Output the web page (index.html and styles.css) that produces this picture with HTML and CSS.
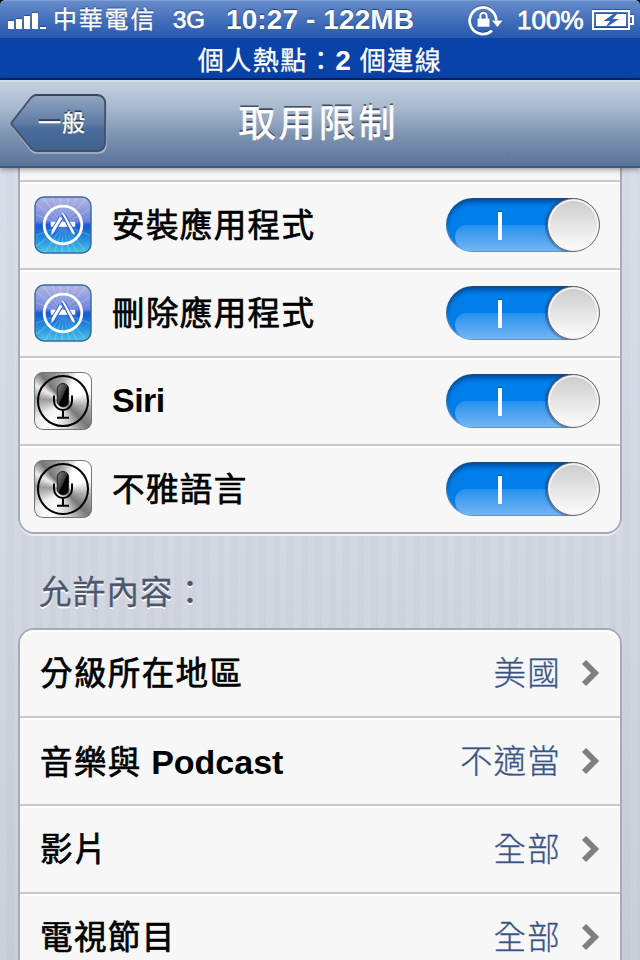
FILE: index.html
```html
<!DOCTYPE html>
<html lang="zh-Hant">

<head>
    <meta charset="UTF-8">
    <meta name="viewport" content="width=device-width, initial-scale=1.0">
    <title>取用限制</title>
    <link rel="stylesheet" href="styles.css">
</head>

<body>
    <!-- shared icons -->
    <svg class="defs" width="0" height="0">
        <defs>
            <linearGradient id="sky" x1="0" y1="0" x2="0" y2="1">
                <stop offset="0" stop-color="#b4b6e2"/>
                <stop offset=".43" stop-color="#6f85dc"/>
                <stop offset=".5" stop-color="#1557d6"/>
                <stop offset=".68" stop-color="#1b7fdc"/>
                <stop offset="1" stop-color="#4cc6e4"/>
            </linearGradient>
            <linearGradient id="mic" x1="0" y1="0" x2="1" y2="1">
                <stop offset=".1" stop-color="#777"/>
                <stop offset=".5" stop-color="#333"/>
                <stop offset=".52" stop-color="#000"/>
            </linearGradient>
            <clipPath id="round"><rect x="1" y="1" width="56" height="56" rx="9"/></clipPath>
        </defs>
        <symbol id="appstore" viewBox="0 0 58 58">
            <rect x="1" y="1" width="56" height="56" rx="9" fill="url(#sky)"/>
            <g clip-path="url(#round)" stroke="#fff" stroke-width="1.6" opacity=".16">
                <path d="M29 29L0 6M29 29L8 0M29 29L18 0M29 29L26 0M29 29L35 0M29 29L44 0M29 29L54 0M29 29L58 12M29 29L0 18M29 29L58 40M29 29L54 58M29 29L44 58M29 29L36 58M29 29L28 58M29 29L20 58M29 29L10 58M29 29L0 52M29 29L0 40"/>
            </g>
            <rect x="1" y="1" width="56" height="56" rx="9" fill="none" stroke="#34699f" stroke-width="1.4"/>
            <circle cx="29" cy="29" r="18.8" fill="none" stroke="#fff" stroke-width="2.8"/>
            <path d="M16.700 25.800h24.600v5H16.700z" fill="#fff"/>
            <path d="M27 21.500L18.500 36.500" stroke="#2e62d6" stroke-width="4.800"/>
            <path d="M27 21.500L19 35" stroke="#fff" stroke-width="3"/>
            <path d="M17.600 34l3 1.800-3.200 3z" fill="#fff"/>
            <path d="M29 18L39 36" stroke="#2e62d6" stroke-width="4.600"/>
            <path d="M27.500 16.500l2.800 1.200 10 18 .5 3.300-2.800-1.700z" fill="#fff"/>
        </symbol>
        <symbol id="siri" viewBox="0 0 58 58">
            <circle cx="29" cy="29" r="25" fill="none" stroke="#000" stroke-width="2"/>
            <rect x="23.300" y="11.500" width="11.400" height="23.500" rx="5.700" fill="url(#mic)" stroke="#222" stroke-width="1"/>
            <path d="M20 23.500v5.500a9 9 0 0 0 18 0v-5.500M29 38.500v7M23 45.800h12" fill="none" stroke="#000" stroke-width="2"/>
        </symbol>
        <symbol id="chevron" viewBox="0 0 18 26">
            <path d="M2 2L13 13 2 24" fill="none" stroke="#7f7f7f" stroke-width="5.800"/>
        </symbol>
    </svg>

    <div class="statusbar">
        <svg class="signal" width="38" height="18" viewBox="0 0 38 18" fill="#fff">
            <path d="M0 9h6v8H0zM8 7h6v10H8zM16 4h6v13h-6zM24 1h6v16h-6zM32 15h6v2h-6z"/>
        </svg>
        <span class="carrier">中華電信</span>
        <span class="network">3G</span>
        <span class="clock">10:27 - 122MB</span>
        <svg class="lock" width="36" height="34" viewBox="0 0 36 34">
            <path d="M28.300 17.500A13.300 13.300 0 1 0 24 27.500" fill="none" stroke="#fff" stroke-width="2.800"/>
            <path d="M24 17.500h10.500l-5 6.500z" fill="#fff"/>
            <path d="M9.500 15.500h12v8.200H9.500z" fill="#fff"/>
            <path d="M12.300 16v-3a3.200 3.200 0 0 1 6.400 0V16" fill="none" stroke="#fff" stroke-width="2"/>
        </svg>
        <span class="percent">100%</span>
        <svg class="battery" width="42" height="20" viewBox="0 0 42 20">
            <path d="M1 1h36v18H1z" fill="none" stroke="#fff" stroke-width="2"/>
            <path d="M38 6h3v8h-3" fill="none" stroke="#fff" stroke-width="2"/>
            <path d="M4 4h30v12H4z" fill="#fff"/>
            <path d="M23.500 2.500L11.500 11h6.500L13 18l14-9h-6.500L26.500 2.500z" fill="#3562b4"/>
        </svg>
    </div>

    <div class="hotspot">個人熱點：<b>2</b> 個連線</div>

    <div class="navbar">
        <a class="back">
            <svg class="back-shape" width="98" height="62" viewBox="0 0 98 62">
                <defs>
                    <linearGradient id="btn" x1="0" y1="0" x2="0" y2="1">
                        <stop offset="0" stop-color="#93a6c1"/>
                        <stop offset=".5" stop-color="#5f7ca5"/>
                        <stop offset=".6" stop-color="#4b6c9b"/>
                        <stop offset="1" stop-color="#41618e"/>
                    </linearGradient>
                </defs>
                <path d="M27 3H87Q96 3 96 12V52Q96 60 87 60H27Q23 60 20 56L2 33Q1 32 2 31L20 7Q23 3 27 3Z" fill="none" stroke="#a9b7cb" stroke-width="1.500"/>
                <path d="M27 2H86Q95.200 2 95.200 11V49Q95.200 58 86 58H27Q23 58 20 54L2 32Q1 31 2 29L20 6Q23 2 27 2Z" fill="url(#btn)" stroke="#3f5069" stroke-width="1.800"/>
                <path d="M25 2H88" stroke="#394655" stroke-width="1.800"/>
            </svg>
            <span class="back-text">一般</span>
        </a>
        <h1 class="title">取用限制</h1>
    </div>

    <div class="content">
        <ul class="group apps">
            <li class="row cut"></li>
            <li class="row">
                <svg class="icon"><use href="#appstore"/></svg>
                <span class="label">安裝應用程式</span>
                <div class="switch"><i></i><div class="knob"></div></div>
            </li>
            <li class="row">
                <svg class="icon"><use href="#appstore"/></svg>
                <span class="label">刪除應用程式</span>
                <div class="switch"><i></i><div class="knob"></div></div>
            </li>
            <li class="row">
                <svg class="icon metal"><use href="#siri"/></svg>
                <span class="label latin"><b>Siri</b></span>
                <div class="switch"><i></i><div class="knob"></div></div>
            </li>
            <li class="row">
                <svg class="icon metal"><use href="#siri"/></svg>
                <span class="label">不雅語言</span>
                <div class="switch"><i></i><div class="knob"></div></div>
            </li>
        </ul>

        <h2 class="section">允許內容：</h2>

        <ul class="group ratings">
            <li class="row">
                <span class="label">分級所在地區</span>
                <span class="value">美國</span>
                <svg class="arrow"><use href="#chevron"/></svg>
            </li>
            <li class="row">
                <span class="label">音樂與<b> Podcast</b></span>
                <span class="value">不適當</span>
                <svg class="arrow"><use href="#chevron"/></svg>
            </li>
            <li class="row">
                <span class="label">影片</span>
                <span class="value">全部</span>
                <svg class="arrow"><use href="#chevron"/></svg>
            </li>
            <li class="row">
                <span class="label">電視節目</span>
                <span class="value">全部</span>
                <svg class="arrow"><use href="#chevron"/></svg>
            </li>
        </ul>
    </div>
</body>

</html>
```
FILE: styles.css
```css
* {
    box-sizing: border-box;
}
body {
    margin: 0;
    width: 640px;
    height: 960px;
    overflow: hidden;
    display: flex;
    flex-direction: column;
    background-color: #000;
    font-family: "Liberation Sans", "Noto Sans CJK TC", sans-serif;
}
.defs {
    position: absolute;
}

/* status bar */
.statusbar {
    flex: none;
    height: 38px;
    display: flex;
    align-items: center;
    padding: 0 6px 0 8px;
    border-radius: 5px 5px 0 0;
    border-top: 1px solid #7d9fd2;
    background: linear-gradient(#668cca, #4470bb 50%, #2859ae);
    color: #fff;
    white-space: nowrap;
    text-shadow: 0 -1px 1px rgba(0, 20, 70, .6);
}
.statusbar svg {
    flex: none;
    filter: drop-shadow(0 -1px 0 rgba(0, 20, 70, .35));
}
.signal {
    margin-top: 3px;
}
.carrier {
    width: 119px;
    padding-left: 7px;
    font-size: 24px;
    letter-spacing: 1.8px;
    line-height: 36px;
    -webkit-text-stroke: .3px #fff;
}
.network {
    width: 53px;
    padding-left: 8px;
    font-size: 24px;
    -webkit-text-stroke: .7px #fff;
    padding-top: 1px;
}
.clock {
    width: 250px;
    padding-left: 8px;
    font-size: 28px;
    font-weight: bold;
    letter-spacing: .1px;
}
.percent {
    width: 74px;
    padding-left: 13px;
    font-size: 26px;
    -webkit-text-stroke: .8px #fff;
    padding-top: 1px;
}
.battery {
    margin-left: 14px;
}

.hotspot {
    flex: none;
    height: 42px;
    padding-top: 2px;
    background-color: #0a43a8;
    border-bottom: 2px solid #062a70;
    color: #fff;
    font-size: 26px;
    letter-spacing: 1.5px;
    line-height: 42px;
    text-align: center;
    white-space: nowrap;
    -webkit-text-stroke: .3px #fff;
}
.hotspot b {
    font-size: 28px;
    letter-spacing: 0;
    -webkit-text-stroke: 0;
}

/* navigation */
.navbar {
    flex: none;
    height: 88px;
    display: flex;
    align-items: center;
    padding-left: 10px;
    border-top: 2px solid #d3dbe7;
    border-bottom: 2px solid #3d5a84;
    background: linear-gradient(#c3cfdf, #a9b9cf 30%, #8296b4 60%, #5a7499);
    box-shadow: 0 1px 6px rgba(0, 0, 0, .45);
    z-index: 1;
    color: #fff;
}
.back {
    display: grid;
    width: 98px;
    height: 62px;
}
.back-shape,
.back-text {
    grid-area: 1 / 1;
}
.back-text {
    padding-left: 28px;
    font-size: 23px;
    line-height: 60px;
    letter-spacing: 1px;
    text-shadow: 0 -2px 0 rgba(30, 45, 70, .8);
    -webkit-text-stroke: .3px #fff;
}
.title {
    flex: 1;
    margin: 2px 111px 0 0;
    text-align: center;
    font-size: 37px;
    font-weight: 400;
    letter-spacing: 3px;
    line-height: 84px;
    text-shadow: 0 -2px 0 rgba(40, 52, 70, .8);
    -webkit-text-stroke: .6px #fff;
}

/* settings */
.content {
    flex: 1;
    min-height: 0;
    overflow: hidden;
    padding: 0 18px;
    background:
        repeating-linear-gradient(90deg, rgba(255, 255, 255, .09) 0 7px, transparent 7px 14px),
        linear-gradient(#d5dae6, #ced3de 50%, #c5cad5);
}
.group {
    list-style: none;
    margin: 0;
    padding: 0;
    border: 2px solid #a6abb7;
    background-color: #f7f7f7;
}
.apps {
    border-top: none;
    border-radius: 0 0 16px 16px;
    box-shadow: 0 2px 0 #eceff4;
}
.ratings {
    border-radius: 16px 16px 0 0;
    border-bottom: none;
}
.row {
    display: flex;
    align-items: center;
    height: 88px;
    padding: 0 20px 0 14px;
    border-bottom: 2px solid #c8c8c8;
    box-shadow: inset 0 2px 0 #fdfdfd;
}
.row.cut {
    height: 14px;
    box-shadow: none;
}
.apps .row:last-child {
    height: 86px;
    border-bottom: none;
    border-radius: 0 0 14px 14px;
}
.ratings .row {
    padding: 0 20px 0 20px;
}
.ratings .row:first-child {
    border-radius: 14px 14px 0 0;
}
.icon {
    width: 58px;
    height: 58px;
    margin-right: 20px;
}
.metal {
    border-radius: 9px;
    box-shadow: inset 0 0 0 1px #6d7480;
    background: conic-gradient(from 0deg, #aaa, #fff 30deg, #fff 70deg, #aaa 105deg, #777 135deg, #ccc 165deg, #fff 205deg, #eee 235deg, #999 275deg, #eee 300deg, #777 320deg, #aaa);
}
.label {
    flex: 1;
    padding-top: 3px;
    font-size: 32.5px;
    font-weight: 400;
    letter-spacing: 1.4px;
    line-height: 83px;
    white-space: nowrap;
    -webkit-text-stroke: .7px #000;
}
.label b {
    font-size: 34px;
    letter-spacing: 0;
    -webkit-text-stroke: 0;
}
.latin {
    padding-top: 0;
}
.latin b {
    letter-spacing: -.5px;
}
.value {
    padding-top: 3px;
    color: #385487;
    font-size: 32.5px;
    font-weight: 300;
    letter-spacing: 1.2px;
    line-height: 83px;
    -webkit-text-stroke: .3px #385487;
}
.arrow {
    width: 18px;
    height: 26px;
    margin-left: 21px;
}
.section {
    margin: 0;
    height: 94px;
    padding: 16px 0 0 21px;
    color: #4c566c;
    font-size: 32.5px;
    font-weight: 400;
    letter-spacing: 1.2px;
    line-height: 86px;
    text-shadow: 0 2px 0 #fff;
    -webkit-text-stroke: .3px #4c566c;
}

/* switch */
.switch {
    position: relative;
    display: flex;
    align-items: center;
    width: 154px;
    height: 54px;
    border-radius: 27px;
    overflow: hidden;
    background: linear-gradient(90deg, transparent 120px, #eee 120px), #007fea;
    box-shadow: inset 0 1px 1px #174a7c, inset 0 4px 5px rgba(0, 35, 90, .55), inset 1px -1px 1px #7199c0;
}
.switch::before {
    content: "";
    position: absolute;
    left: 9px;
    right: 28px;
    top: 27px;
    bottom: 1px;
    border-radius: 15px 0 0 18px;
    background: linear-gradient(#2590ee, #74b6f4);
}
.switch i {
    position: relative;
    width: 4px;
    height: 28px;
    margin-left: 52px;
    margin-top: 2px;
    background-color: #fff;
    box-shadow: 0 -1px 0 #0a569c;
}
.knob {
    position: relative;
    width: 53px;
    height: 54px;
    margin-left: auto;
    border-radius: 50%;
    border: 1.500px solid #666;
    background: linear-gradient(#cbcbcb, #fdfdfd);
    box-shadow: inset 0 0 0 2px #f4f4f4, -1px 0 3px rgba(0, 20, 60, .6);
}
```
